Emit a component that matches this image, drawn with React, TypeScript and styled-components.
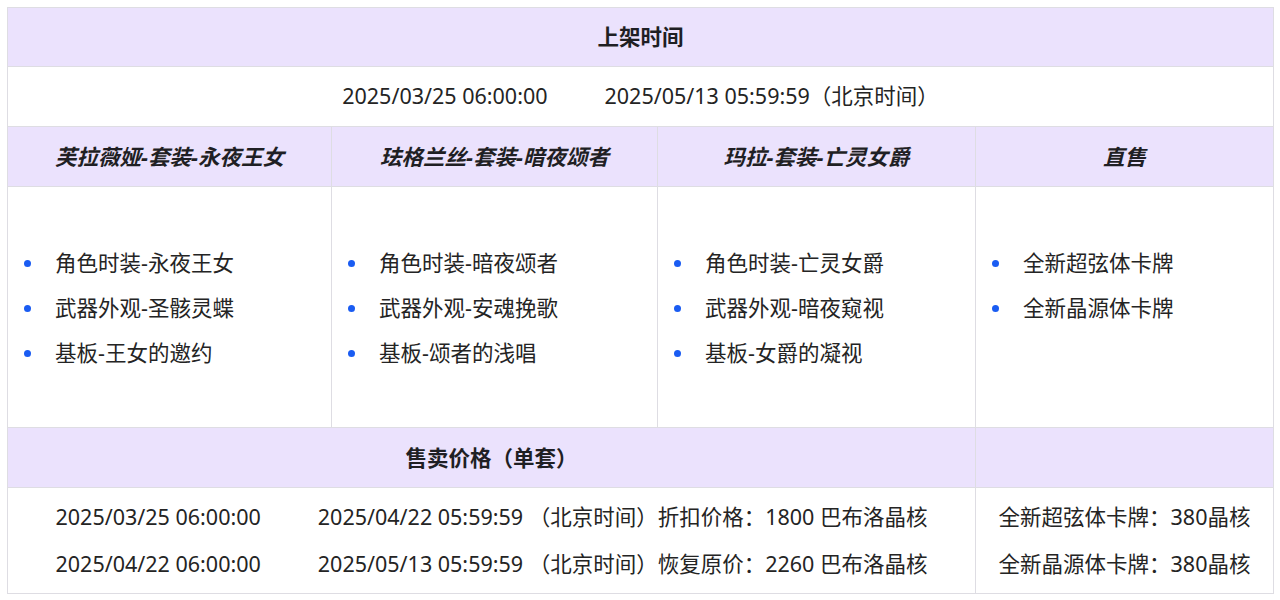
import * as React from "react";
import styled, { createGlobalStyle } from "styled-components";

const GlobalStyle = createGlobalStyle`
  html, body {
    margin: 0;
    padding: 0;
    background: #fff;
  }
  body {
    font-family: "Noto Sans", "Noto Sans CJK SC", sans-serif;
    color: #222;
  }
`;

const Page = styled.div`
  padding: 7px;
  width: 1266px;
`;

const Table = styled.table`
  width: 1266px;
  border-collapse: collapse;
  table-layout: fixed;
  font-size: 21.5px;
  color: #242424;
`;

const Row = styled.tr<{ $h: number }>`
  height: ${(p) => p.$h}px;
`;

const HeadCell = styled.th<{ $italic?: boolean }>`
  background: #ebe2fd;
  border: 1px solid #dedde3;
  font-weight: 700;
  font-style: ${(p) => (p.$italic ? "italic" : "normal")};
  text-align: center;
  vertical-align: middle;
  padding: 0 0 3px 0;
  color: #1f1f24;
`;

const Cell = styled.td<{ $top?: boolean; $pb?: number }>`
  border: 1px solid #dedde3;
  text-align: center;
  vertical-align: ${(p) => (p.$top ? "top" : "middle")};
  padding: 0 0 ${(p) => (p.$pb ?? 0)}px 0;
`;

const Gap = styled.span<{ $w: number }>`
  display: inline-block;
  width: ${(p) => p.$w}px;
`;

const List = styled.ul`
  list-style: none;
  margin: 0;
  padding: 53px 0 0 0;
  text-align: left;
`;

const Item = styled.li`
  position: relative;
  height: 45px;
  line-height: 45px;
  padding-left: 47px;

  &::before {
    content: "";
    position: absolute;
    left: 16px;
    top: 20px;
    width: 7px;
    height: 7px;
    border-radius: 50%;
    background: #1a5cf2;
  }
`;

const PriceLine = styled.div`
  height: 47px;
  line-height: 47px;
  white-space: nowrap;
`;

const columns = [
  {
    title: "芙拉薇娅-套装-永夜王女",
    items: ["角色时装-永夜王女", "武器外观-圣骸灵蝶", "基板-王女的邀约"],
  },
  {
    title: "珐格兰丝-套装-暗夜颂者",
    items: ["角色时装-暗夜颂者", "武器外观-安魂挽歌", "基板-颂者的浅唱"],
  },
  {
    title: "玛拉-套装-亡灵女爵",
    items: ["角色时装-亡灵女爵", "武器外观-暗夜窥视", "基板-女爵的凝视"],
  },
  {
    title: "直售",
    items: ["全新超弦体卡牌", "全新晶源体卡牌"],
  },
];

const prices = [
  {
    start: "2025/03/25 06:00:00",
    end: "2025/04/22 05:59:59",
    text: "折扣价格：1800 巴布洛晶核",
  },
  {
    start: "2025/04/22 06:00:00",
    end: "2025/05/13 05:59:59",
    text: "恢复原价：2260 巴布洛晶核",
  },
];

export default function App() {
  return (
    <Page>
      <GlobalStyle />
      <Table>
        <colgroup>
          <col style={{ width: 324 }} />
          <col style={{ width: 326 }} />
          <col style={{ width: 318 }} />
          <col style={{ width: 298 }} />
        </colgroup>
        <tbody>
          <Row $h={59}>
            <HeadCell colSpan={4}>上架时间</HeadCell>
          </Row>
          <Row $h={60}>
            <Cell colSpan={4} $pb={5}>
              2025/03/25 06:00:00
              <Gap $w={57} />
              2025/05/13 05:59:59（北京时间）
            </Cell>
          </Row>
          <Row $h={60}>
            {columns.map((c) => (
              <HeadCell key={c.title} $italic>
                {c.title}
              </HeadCell>
            ))}
          </Row>
          <Row $h={241}>
            {columns.map((c) => (
              <Cell key={c.title} $top>
                <List>
                  {c.items.map((it) => (
                    <Item key={it}>{it}</Item>
                  ))}
                </List>
              </Cell>
            ))}
          </Row>
          <Row $h={60}>
            <HeadCell colSpan={3}>售卖价格（单套）</HeadCell>
            <HeadCell />
          </Row>
          <Row $h={106}>
            <Cell colSpan={3} $pb={2}>
              {prices.map((p) => (
                <PriceLine key={p.start}>
                  {p.start}
                  <Gap $w={57} />
                  {p.end} （北京时间）{p.text}
                </PriceLine>
              ))}
            </Cell>
            <Cell $pb={2}>
              <PriceLine>全新超弦体卡牌：380晶核</PriceLine>
              <PriceLine>全新晶源体卡牌：380晶核</PriceLine>
            </Cell>
          </Row>
        </tbody>
      </Table>
    </Page>
  );
}
